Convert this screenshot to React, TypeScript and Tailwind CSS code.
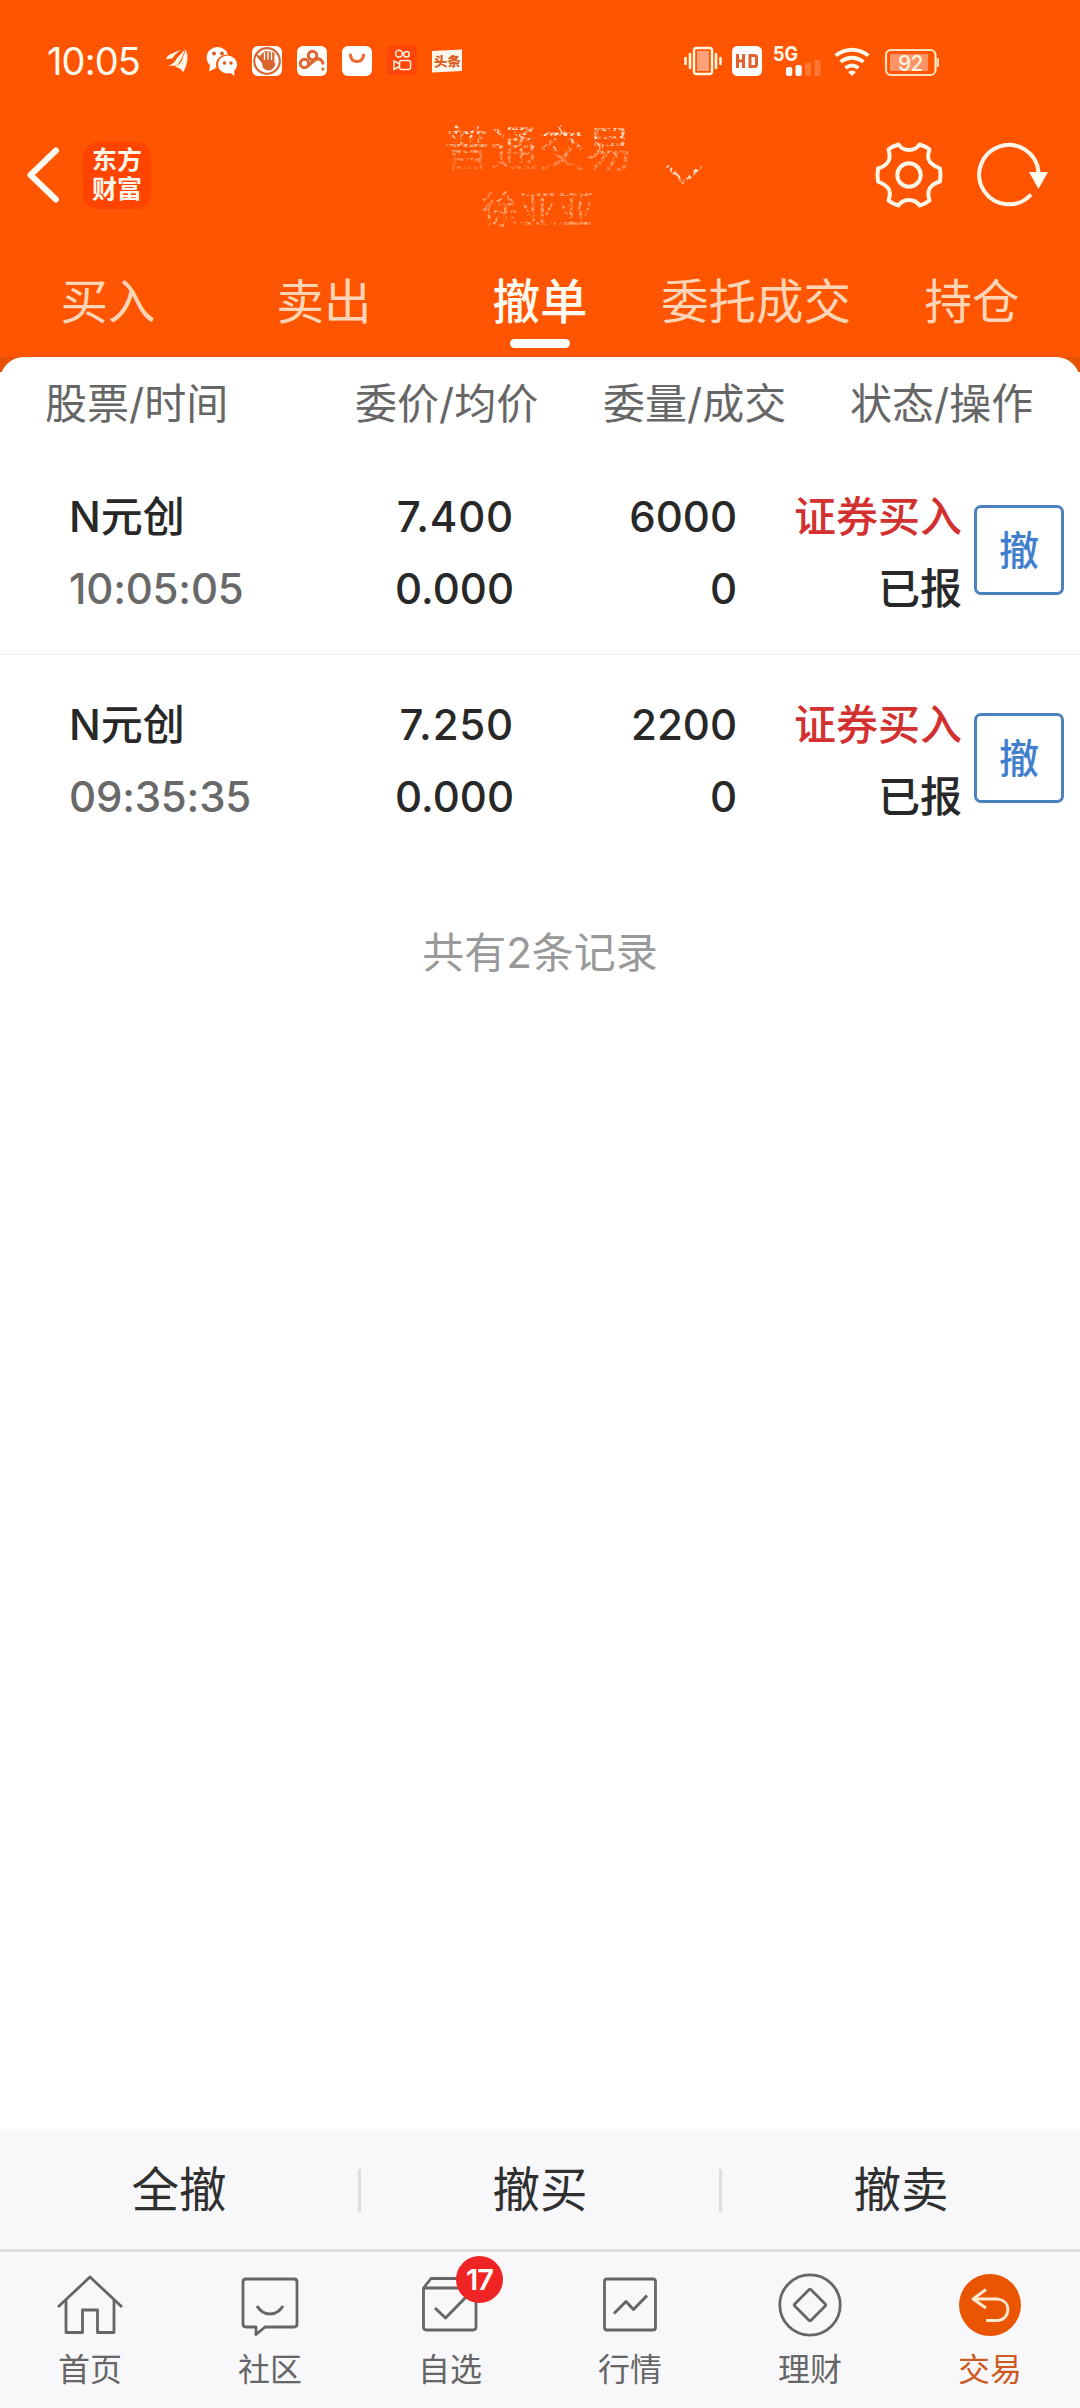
import type { ReactNode } from "react";
import clsx from "clsx";

type Order = {
  name: string;
  time: string;
  price: string;
  avgPrice: string;
  amount: string;
  filled: string;
  action: string;
  status: string;
};

const ORDERS: Order[] = [
  {
    name: "N元创",
    time: "10:05:05",
    price: "7.400",
    avgPrice: "0.000",
    amount: "6000",
    filled: "0",
    action: "证券买入",
    status: "已报",
  },
  {
    name: "N元创",
    time: "09:35:35",
    price: "7.250",
    avgPrice: "0.000",
    amount: "2200",
    filled: "0",
    action: "证券买入",
    status: "已报",
  },
];

const TABS = ["买入", "卖出", "撤单", "委托成交", "持仓"];
const ACTIVE_TAB = "撤单";

function StatusBar() {
  return (
    <div className="flex h-[122px] items-center text-[#fffaf0]">
      <span className="ml-[47px] w-[118px] text-[38px] leading-none tracking-[-0.9px]">
        10:05
      </span>
      <svg width="300" height="32" viewBox="165 45 300 32" fill="none">
        {/* feather */}
        <g fill="#fff6ea">
          <path d="M166 59q1-4 7-6l9-3.500q-8 5-9.500 9z" />
          <path d="M168 66q6-2 9-8l8-8.500q-3 10-8 16z" />
          <path d="M175 67q7-4 8-10l3-7.500 1.500 6q.5 9-4.500 17-2-5-8-5.500z" />
        </g>
        {/* wechat */}
        <ellipse cx="217.500" cy="57.500" rx="10.800" ry="10.500" fill="#fff" />
        <path d="M210 65l-1 6.500 7-3.500z" fill="#fff" />
        <ellipse cx="227" cy="64.500" rx="11" ry="10" fill="#ff5500" />
        <ellipse cx="227.500" cy="64.500" rx="9.600" ry="9" fill="#fff" />
        <path d="M229 72l5.500 4-.5-6z" fill="#fff" />
        <g fill="#e05a20">
          <circle cx="214" cy="53.500" r="1.900" />
          <circle cx="222" cy="53.500" r="1.900" />
          <circle cx="224.500" cy="63" r="1.700" />
          <circle cx="231" cy="63" r="1.700" />
        </g>
        {/* palm */}
        <rect x="252" y="46" width="30" height="30" rx="6" fill="#fff" />
        <circle cx="267" cy="61" r="12.800" stroke="#d96530" strokeWidth="2.200" />
        <path
          d="M258 57.500l4 5.500 1 5q4 4 9 1.500 3-2 3.500-6V55l-2.500-3-8-1z"
          fill="#d96530"
        />
        <path
          d="M264.500 52v8M268 51.500v8M271.500 52v8M275 55v8"
          stroke="#fff"
          strokeWidth="1.300"
        />
        <path d="M256 54l8 9.500" stroke="#d96530" strokeWidth="2" />
        {/* cloud drive */}
        <rect x="297" y="46" width="30" height="30" rx="6" fill="#fff" />
        <g stroke="#df6530" strokeWidth="3">
          <circle cx="312.500" cy="55.500" r="4.200" />
          <circle cx="304.500" cy="63.500" r="4.200" />
          <path d="M307 66.500l8-6.500q4-2.500 6.500.5 1.500 1.500 1.500 4" />
        </g>
        <circle cx="322.800" cy="69" r="1.600" fill="#df6530" />
        {/* shop */}
        <rect x="342" y="46" width="30" height="30" rx="6" fill="#fff" />
        <path
          d="M350.500 55q.5 6.500 6.500 6.500t6.500-6.500"
          stroke="#ee6a35"
          strokeWidth="3.200"
          strokeLinecap="round"
        />
        {/* camera */}
        <rect x="387" y="45.500" width="30" height="29.500" rx="3" fill="#ff4508" />
        <g stroke="#fff0df" strokeWidth="1.500">
          <circle cx="399" cy="53.700" r="3.400" />
          <circle cx="406.500" cy="54.200" r="2.800" />
          <rect x="399.500" y="60.500" width="11" height="9" rx="2" />
          <path d="M399.500 64l-5.500-3v8.500l5.500-3" />
        </g>
        {/* news */}
        <path d="M432 51l30-1.500v21.500l-30 1.500z" fill="#fff6ea" />
        <text
          x="434"
          y="66.500"
          fontSize="13.500"
          fontWeight="900"
          fill="#d95a1c"
          transform="rotate(-1 447 61)"
        >
          头条
        </text>
      </svg>

      <svg
        className="ml-[219px] overflow-visible"
        width="258"
        height="40"
        viewBox="684 41 258 40"
        fill="none"
      >
        {/* vibrate */}
        <rect x="694" y="48" width="18" height="26" rx="2.500" stroke="#fff6e0" strokeWidth="2.400" />
        <rect x="697" y="51" width="12" height="20" fill="#ffa27a" />
        <path
          d="M690 54v14M685.500 58v6M716 54v14M720.500 58v6"
          stroke="#fff6e0"
          strokeWidth="2.600"
          strokeLinecap="round"
        />
        {/* hd */}
        <rect x="732" y="46" width="30" height="30" rx="5.500" fill="#fff" />
        <path
          d="M737.500 54v14M743.500 54v14M737.500 61h6M750 55.500h4.500q2 0 2 2v7q0 2-2 2H750z"
          stroke="#e2622e"
          strokeWidth="3"
        />
        {/* signal */}
        <text
          x="773"
          y="61"
          fontSize="20"
          fontWeight="700"
          textLength="25"
          lengthAdjust="spacingAndGlyphs"
          fill="#fff6e6"
        >
          5G
        </text>
        <rect x="786" y="67" width="6.200" height="9" rx="2" fill="#fff" />
        <rect x="795.500" y="65" width="6.200" height="11" rx="2" fill="#fff" />
        <rect x="805" y="62.500" width="6.200" height="13.500" rx="2" fill="#ff7733" />
        <rect x="814.500" y="60" width="6.200" height="16" rx="2" fill="#ff7733" />
        {/* wifi */}
        <g stroke="#fff6ea" strokeWidth="3.800">
          <path d="M835.500 55.500q16.500-11.500 33 0" />
          <path d="M840.500 61.800q11.500-8 23 0" />
          <path d="M845.500 68q6.500-5 13 0" />
        </g>
        <path d="M848 72q4-3 8 0l-4 4z" fill="#fff6ea" />
        {/* battery */}
        <rect x="886" y="50" width="49.500" height="25" rx="5" stroke="#ffe2bd" strokeWidth="2.200" />
        <rect x="890" y="54" width="38" height="17" rx="1" fill="#ff9566" />
        <rect x="936.500" y="58" width="2.500" height="9" rx="1" fill="#ffe2bd" />
        <text x="898" y="70.500" fontSize="21" fontWeight="500" textLength="25.500" fill="#fff3e0">
          92
        </text>
      </svg>
    </div>
  );
}

function TitleBar() {
  return (
    <div className="flex h-[106px] items-center">
      <svg className="ml-[24px]" width="38" height="60" viewBox="0 0 38 60" fill="none">
        <path
          d="M32 5.500L6.500 30 32 54.500"
          stroke="#fffaf0"
          strokeWidth="6"
          strokeLinecap="round"
          strokeLinejoin="round"
        />
      </svg>
      <div className="ml-[21px] flex h-[67px] w-[68px] flex-col items-center justify-center rounded-[15px] bg-[#ff4400] text-[25px] leading-[29px] font-bold text-[#fff6ec]">
        <span>东方</span>
        <span>财富</span>
      </div>
      <div className="mt-[8px] ml-[290px] flex w-[194px] shrink-0 flex-col items-center whitespace-nowrap [filter:url(#worn)]">
        <span className="bg-linear-to-b from-[#ffe6d4] from-25% to-[#ff8d55] to-70% bg-clip-text text-[47.500px] leading-[60px] text-transparent">
          普通交易
        </span>
        <span className="text-[38px] leading-[60px] text-[#ffa777]">徐亚亚</span>
      </div>
      <svg
        className="ml-[29px] [filter:url(#worn)]"
        width="40"
        height="24"
        viewBox="0 0 40 24"
        fill="none"
      >
        <path d="M3 3l17 16.500L37 3" stroke="#ffe6d4" strokeWidth="3.500" />
      </svg>
      <svg className="ml-[170px]" width="70" height="70" viewBox="-35 -35 70 70" fill="none">
        <g stroke="#fff6e8" strokeWidth="4" strokeLinejoin="round">
          <path d="M-10.500-30.500Q-7-25 0-25T10.500-30.500Q17-28.500 20.500-25.500 17.500-17 21-13T31-6.500Q32 0 31 6.500 24 8.500 21 13T20.500 25.500Q17 28.500 10.500 30.500 7 25 0 25T-10.500 30.500Q-17 28.500-20.500 25.500-17.500 17-21 13T-31 6.500Q-32 0-31-6.500-24-8.500-21-13T-20.500-25.500Q-17-28.500-10.500-30.500Z" />
          <circle r="11.700" />
        </g>
      </svg>
      <svg className="ml-[32px]" width="76" height="70" viewBox="-33 -35 76 70" fill="none">
        <path d="M22 19.500A29.700 29.700 0 1 1 29.500-3" stroke="#fff6e8" strokeWidth="4" />
        <path d="M20-3h19L29.500 14z" fill="#fffaf2" />
      </svg>
    </div>
  );
}

function OrderRow({ order, last }: { order: Order; last: boolean }) {
  return (
    <div
      className={clsx(
        "flex h-[208px] border-b pt-[34px] pl-[69px] text-[42px] leading-[72px] font-medium text-[#282828]",
        last ? "border-transparent" : "border-[#ededed]",
      )}
    >
      <div className="w-[245px]">
        <p>{order.name}</p>
        <p className="tracking-[-0.2px] text-[#696969]">{order.time}</p>
      </div>
      <div className="w-[200px] text-right">
        <p className="tracking-[0.8px]">{order.price}</p>
        <p>{order.avgPrice}</p>
      </div>
      <div className="w-[223px] text-right">
        <p>{order.amount}</p>
        <p>{order.filled}</p>
      </div>
      <div className="w-[225px] text-right">
        <p className="text-[#d33030]">{order.action}</p>
        <p>{order.status}</p>
      </div>
      <button className="mt-[24px] ml-[12px] flex size-[90px] items-center justify-center rounded-[7px] border-3 border-[#4a82bd] pt-[2px] text-[40px] leading-none text-[#3f7fcd]">
        撤
      </button>
    </div>
  );
}

function NavItem({
  label,
  active,
  badge,
  children,
}: {
  label: string;
  active?: boolean;
  badge?: number;
  children: ReactNode;
}) {
  return (
    <div
      className={clsx(
        "relative flex w-[180px] flex-col items-center pt-[18px] text-[32px] leading-[48px]",
        active ? "text-[#cc5a22]" : "text-[#666]",
      )}
    >
      <svg
        width="70"
        height="70"
        viewBox="-35 -35 70 70"
        fill="none"
        stroke="#666"
        strokeWidth="2.800"
        strokeLinejoin="round"
      >
        {children}
      </svg>
      <span className="mt-[6px]">{label}</span>
      {badge && (
        <span className="absolute top-[4px] left-[96px] flex size-[47px] items-center justify-center rounded-full bg-[#f02424] text-[29px] leading-none font-semibold tracking-[-1px] text-white">
          {badge}
        </span>
      )}
    </div>
  );
}

export default function App() {
  return (
    <div className="flex h-[2408px] w-[1080px] flex-col overflow-hidden bg-white font-[Inter,'Noto_Sans_CJK_SC',sans-serif]">
      {/* eats holes in the title text */}
      <svg className="absolute size-0">
        <filter id="worn" x="0" y="0" width="100%" height="100%">
          <feTurbulence type="fractalNoise" baseFrequency="0.3" numOctaves="2" seed="4" />
          <feColorMatrix values="0 0 0 0 0  0 0 0 0 0  0 0 0 0 0  0 0 0 4 -1.600" result="holes" />
          <feComposite in="SourceGraphic" in2="holes" operator="in" />
        </filter>
      </svg>

      <div className="h-[357px] shrink-0 bg-[#ff5500]">
        <StatusBar />
        <TitleBar />
        <div className="flex h-[129px]">
          {TABS.map((tab) => (
            <div
              key={tab}
              className={clsx(
                "flex w-[216px] flex-col items-center pt-[38px] text-[47.500px] leading-[72px]",
                tab === ACTIVE_TAB ? "font-medium text-[#fffaf0]" : "text-[#ffd5b8]",
              )}
            >
              <span className="whitespace-nowrap">{tab}</span>
              {tab === ACTIVE_TAB && (
                <span className="mt-px h-[9px] w-[60px] rounded-full bg-white" />
              )}
            </div>
          ))}
        </div>
      </div>

      <div className="grow bg-[linear-gradient(#e65200_15px,#fff_15px)]">
        <div className="rounded-t-[24px] bg-white">
          <div className="flex h-[90px] pl-[45px] text-[42px] leading-[94px] text-[#666]">
            <span className="w-[310px]">股票/时间</span>
            <span className="w-[248px]">委价/均价</span>
            <span className="w-[247px]">委量/成交</span>
            <span>状态/操作</span>
          </div>
          {ORDERS.map((order, i) => (
            <OrderRow key={order.time} order={order} last={i === ORDERS.length - 1} />
          ))}
          <p className="mt-[60px] text-center text-[42px] leading-[60px] text-[#999]">
            共有{ORDERS.length}条记录
          </p>
        </div>
      </div>

      <div className="flex h-[120px] shrink-0 items-center bg-[#f8f8fa] pt-[2px] text-[47.500px] text-[#303030]">
        <span className="w-[358px] text-center">全撤</span>
        <span className="h-[43px] w-[3px] bg-[#dedee0]" />
        <span className="w-[358px] text-center">撤买</span>
        <span className="h-[43px] w-[3px] bg-[#dedee0]" />
        <span className="w-[358px] text-center">撤卖</span>
      </div>

      <div className="flex h-[159px] shrink-0 border-t-3 border-[#dedee0] bg-[#f8f8fa]">
        <NavItem label="首页">
          <path d="M-32 2L0-28 32 2" />
          <path d="M-24-5V27.500H-7.500V5H7.500V27.500H24V-5" />
        </NavItem>
        <NavItem label="社区">
          <path d="M-24-26H24Q27-26 27-23V19Q27 22 24 22H-5L-14 29.500V22H-24Q-27 22-27 19V-23Q-27-26-24-26Z" />
          <path d="M-13 1Q-8 9 0 9T13 1" strokeWidth="3" />
        </NavItem>
        <NavItem label="自选" badge={17}>
          <path d="M-26.500-17L-19-26.500H19L26-17V22Q26 25 23 25H-23.500Q-26.500 25-26.500 22ZM-26.500-17H26" />
          <path d="M-15 3L-4.500 13 16-8" strokeWidth="3" />
        </NavItem>
        <NavItem label="行情">
          <rect x="-25.500" y="-26" width="51" height="51" rx="2.500" />
          <path d="M-16 8.500L-4-3.500 3.500 4.500 17-9.500" strokeWidth="3" />
        </NavItem>
        <NavItem label="理财">
          <circle r="30.200" />
          <rect x="-11.500" y="-11.500" width="23" height="23" rx="1.500" transform="rotate(45)" />
        </NavItem>
        <NavItem label="交易" active>
          <circle r="31" fill="#ea5504" stroke="none" />
          <path d="M-4-15.500L-17-6-4 3M-17-6H8Q18-4 18 5 17 14.500 8 15.500H-4" stroke="#ffe9cf" />
        </NavItem>
      </div>
    </div>
  );
}
